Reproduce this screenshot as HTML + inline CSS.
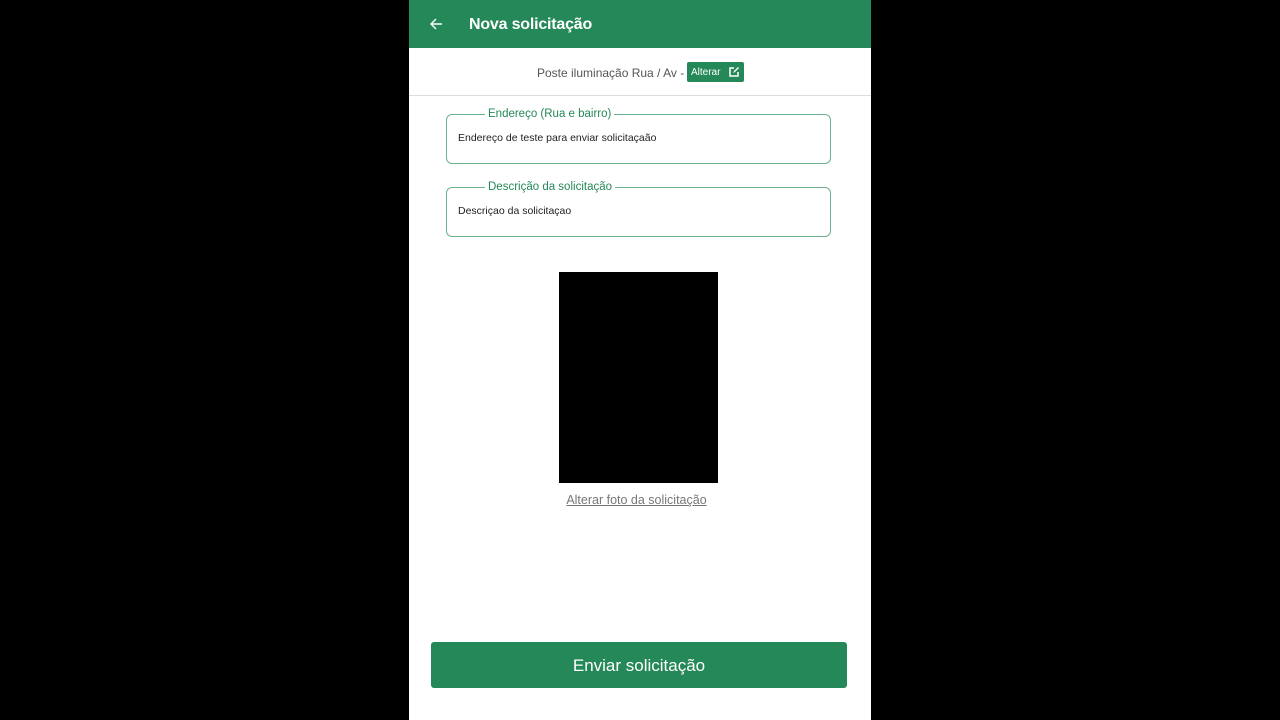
<!DOCTYPE html>
<html><head><meta charset="utf-8"><style>
*{margin:0;padding:0;box-sizing:border-box}
body{width:1280px;height:720px;background:#000;font-family:"Liberation Sans",sans-serif;position:relative;overflow:hidden}
.app{position:absolute;left:409px;top:0;width:462px;height:720px;background:#fff}
.hdr{position:absolute;left:0;top:0;width:462px;height:48px;background:#258858}
.hdr .t{position:absolute;left:60px;top:16px;color:#fff;font-size:16px;font-weight:bold;letter-spacing:-0.2px}
.sub{position:absolute;left:0;top:48px;width:462px;height:48px;border-bottom:1px solid #ddd}
.sub .p{position:absolute;left:128px;top:18px;font-size:12px;color:#555}
.btnA{position:absolute;left:278px;top:14px;width:57px;height:20px;background:#258858;border-radius:2px;color:#fff;font-size:10px;padding:5px 0 0 4px}
fieldset{position:absolute;left:37px;width:385px;height:56px;border:1px solid #6cb28e;border-radius:6px;padding:0 11px}
legend{color:#258858;font-size:11.5px;padding:0 3px;margin-left:27px}
fieldset div{font-size:10.5px;color:#222;margin-top:12px}
.photo{position:absolute;left:150px;top:272px;width:159px;height:211px;background:#000}
.lnk{position:absolute;left:0;width:455px;top:493px;text-align:center;font-size:12.5px;color:#777;text-decoration:underline}
.send{position:absolute;left:22px;top:642px;width:416px;height:46px;background:#258858;border-radius:3px;color:#fff;font-size:17px;text-align:center;line-height:48px}
</style></head><body><div class="app">
<div class="hdr"><svg style="position:absolute;left:20px;top:17px" width="14" height="14" viewBox="0 0 14 14"><path d="M13 7H2M7 2L2 7l5 5" stroke="#fff" stroke-width="1.4" fill="none"/></svg><div class="t">Nova solicitação</div></div>
<div class="sub"><div class="p">Poste iluminação Rua / Av -</div><div class="btnA">Alterar <svg style="position:absolute;left:41px;top:4px" width="12" height="12" viewBox="0 0 12 12"><path d="M6 2H2v8h8V6" stroke="#fff" stroke-width="1.5" fill="none"/><path d="M5 7l1-2 4-4 1 1-4 4z" fill="#fff"/></svg></div></div>
<fieldset style="top:108px"><legend>Endereço (Rua e bairro)</legend><div>Endereço de teste para enviar solicitaçaão</div></fieldset>
<fieldset style="top:181px"><legend>Descrição da solicitação</legend><div>Descriçao da solicitaçao</div></fieldset>
<div class="photo"></div>
<div class="lnk">Alterar foto da solicitação</div>
<div class="send">Enviar solicitação</div>
</div></body></html>
